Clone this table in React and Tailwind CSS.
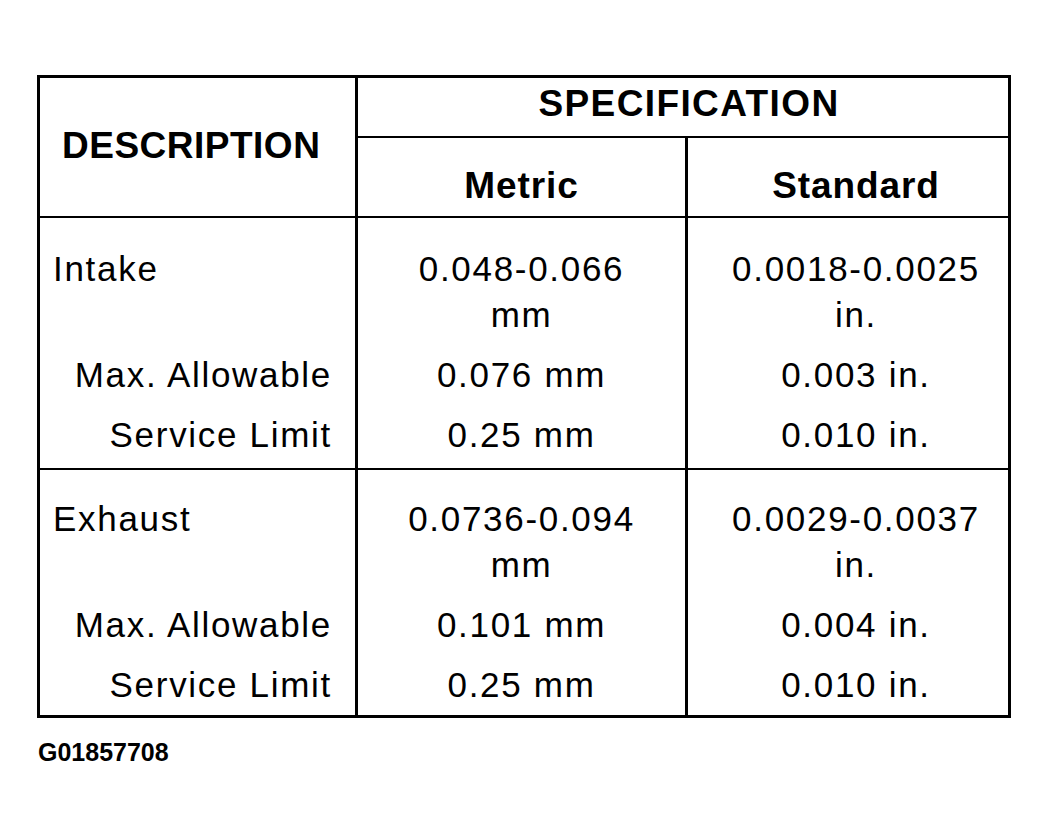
export default function App() {
  const rows = [
    {
      name: "Intake",
      h: "h-[252px] border-b-2",
      pt: "pt-[28px]",
      metric: ["0.048-0.066", "mm", "0.076 mm", "0.25 mm"],
      std: ["0.0018-0.0025", "in.", "0.003 in.", "0.010 in."],
    },
    {
      name: "Exhaust",
      h: "h-[245px]",
      pt: "pt-[26px]",
      metric: ["0.0736-0.094", "mm", "0.101 mm", "0.25 mm"],
      std: ["0.0029-0.0037", "in.", "0.004 in.", "0.010 in."],
    },
  ];
  const line = "h-[46px] leading-[46px] whitespace-nowrap";
  return (
    <div
      className="min-h-[838px] w-[1049px] bg-white pt-[75px] pl-[37px] text-black"
      style={{ fontFamily: '"Liberation Sans", Arial, sans-serif' }}
    >
      <div className="w-[974px] border-[3px] border-black">
        <div className="flex h-[140px] border-b-2 border-black">
          <div className="flex w-[318px] items-center border-r-[3px] border-black pb-[2px] pl-[22px] text-[37px] font-bold tracking-[0.5px]">
            DESCRIPTION
          </div>
          <div className="flex flex-1 flex-col">
            <div className="flex h-[60px] items-center justify-center border-b-2 border-black pb-[7px] pl-[12px] text-[37px] font-bold tracking-[1.4px]">
              SPECIFICATION
            </div>
            <div className="flex flex-1 text-[37px] font-bold tracking-[0.9px]">
              <div className="flex w-[330px] items-center justify-center border-r-[3px] border-black pt-[18px]">
                Metric
              </div>
              <div className="flex flex-1 items-center justify-center pl-[16px] pt-[18px]">
                Standard
              </div>
            </div>
          </div>
        </div>
        {rows.map((r) => (
          <div key={r.name} className={`flex border-black ${r.h} text-[35px] tracking-[1.7px]`}>
            <div className={`w-[318px] border-r-[3px] border-black ${r.pt}`}>
              <div className={`${line} pl-[13px]`}>{r.name}</div>
              <div className={line}></div>
              <div className={`${line} mt-[14px] pr-[23px] text-right`}>Max. Allowable</div>
              <div className={`${line} mt-[14px] pr-[23px] text-right`}>Service Limit</div>
            </div>
            <div className={`w-[330px] border-r-[3px] border-black text-center ${r.pt}`}>
              <div className={line}>{r.metric[0]}</div>
              <div className={line}>{r.metric[1]}</div>
              <div className={`${line} mt-[14px]`}>{r.metric[2]}</div>
              <div className={`${line} mt-[14px]`}>{r.metric[3]}</div>
            </div>
            <div className={`flex-1 pl-[16px] text-center ${r.pt}`}>
              <div className={line}>{r.std[0]}</div>
              <div className={line}>{r.std[1]}</div>
              <div className={`${line} mt-[14px]`}>{r.std[2]}</div>
              <div className={`${line} mt-[14px]`}>{r.std[3]}</div>
            </div>
          </div>
        ))}
      </div>
      <div className="mt-[22px] pl-[1px] text-[25px] font-bold leading-none">G01857708</div>
    </div>
  );
}
